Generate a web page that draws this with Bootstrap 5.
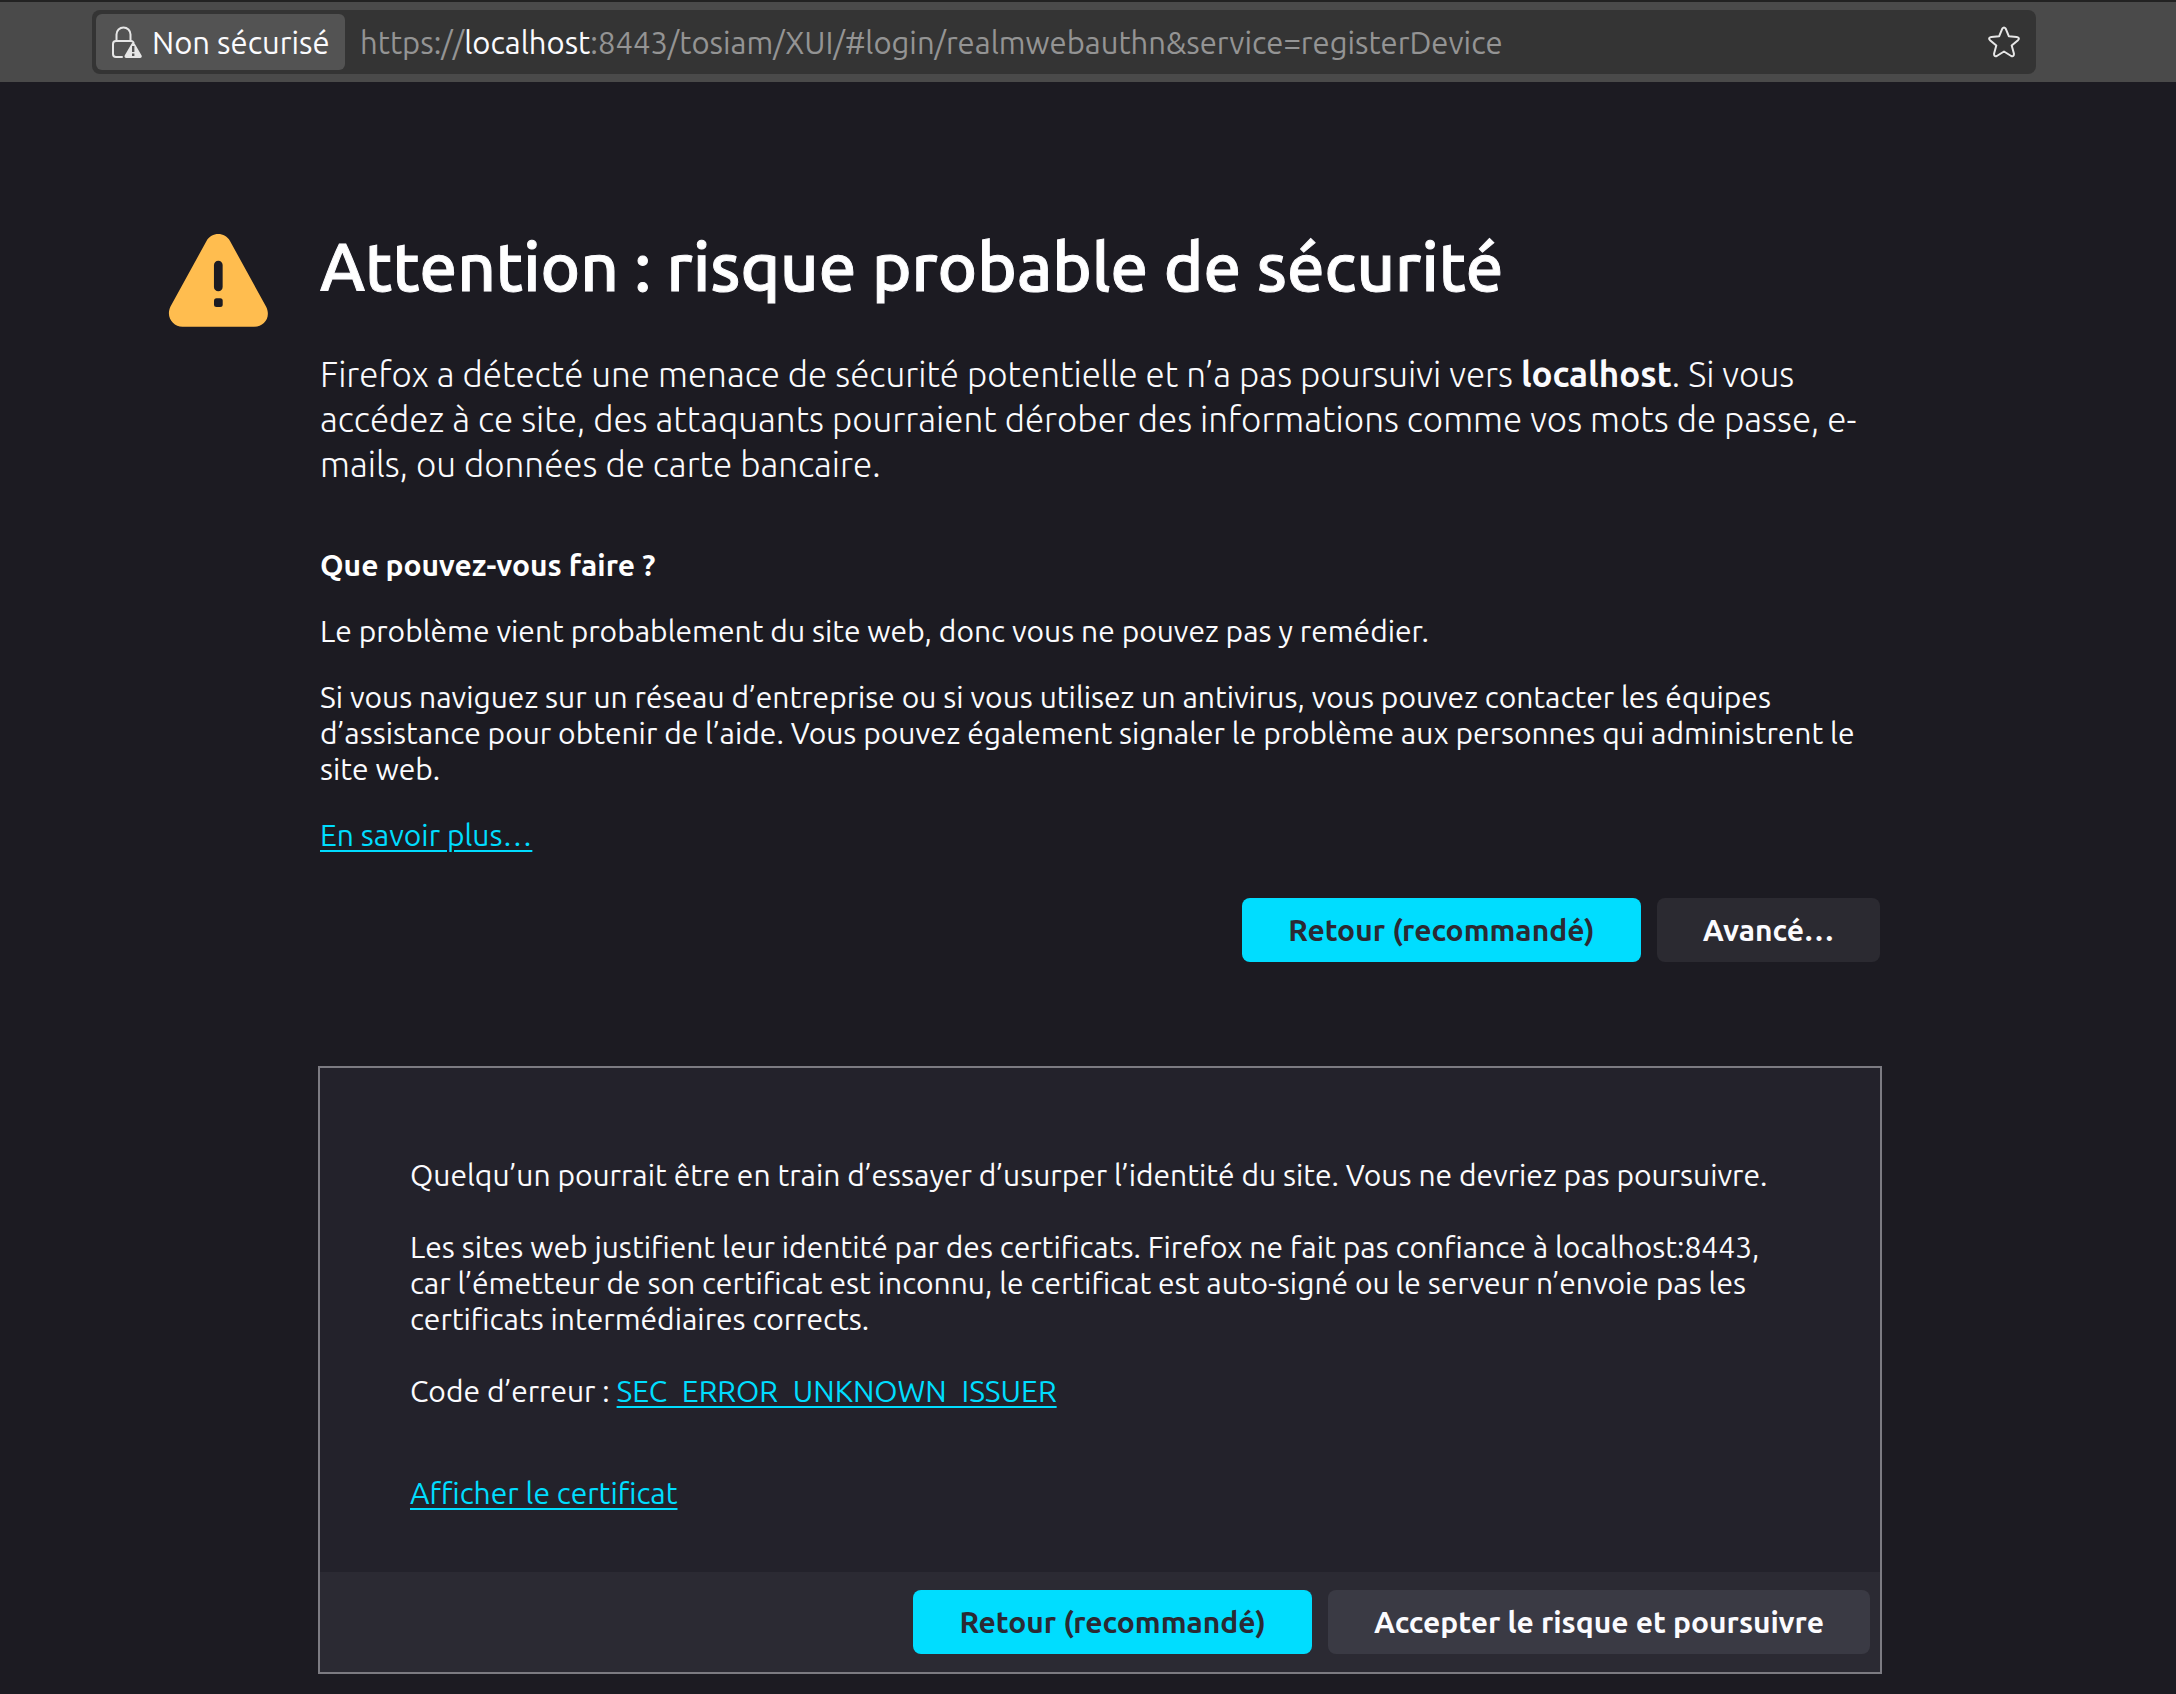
<!DOCTYPE html>
<html lang="fr" data-bs-theme="dark">
<head>
<meta charset="utf-8">
<meta name="viewport" content="width=device-width, initial-scale=1">
<title>Attention : risque probable de sécurité</title>
<link href="https://cdn.jsdelivr.net/npm/bootstrap@5.3.0/dist/css/bootstrap.min.css" rel="stylesheet">
<style>
  body { background: #1c1b22; color: #fbfbfe; font-family: Ubuntu, "Noto Sans", sans-serif; font-size: 30px; line-height: 36px; font-weight: 400; }
  .toolbar { background: #4a4a4a; border-top: 2px solid #222; padding: 8px 140px 8px 92px; font-size: 31px; line-height: 37px; }
  .urlbar { background: #343434; border-radius: 8px; height: 64px; padding: 4px; padding-right: 16px; }
  .identity { background: #535353; color: #fbfbfe; border: 0; border-radius: 6px; height: 56px; width: 249px; padding: 0 0 0 14px; gap: 8px; }
  .address { color: #949494; padding-left: 15px; }
  .address span { color: #fbfbfe; }
  .star-btn { background: none; border: 0; padding: 0; }
  .error-page { max-width: 1840px; padding: 145px 128px 18px 0; }
  .warn-col { width: 152px; padding-top: 7px; }
  .page-title { font-size: 67px; line-height: 79px; font-weight: 500; margin-bottom: 46px; -webkit-text-stroke: 1px #fbfbfe; }
  .intro { font-size: 35px; line-height: 45px; font-weight: 300; margin-bottom: 60px; }
  .intro strong { font-weight: 600; }
  .subtitle { font-size: 30px; line-height: 36px; font-weight: 600; margin-bottom: 30px; }
  .para { margin-bottom: 30px; }
  a, a:hover { color: #00ddff; text-decoration-thickness: 2px; text-underline-offset: 4px; }
  .act { height: 64px; border: 0; border-radius: 8px; padding: 0 46px; font-size: 30px; font-weight: 600; line-height: 36px; }
  .act-main, .act-main:hover { background: #00ddff; color: #2b2a33; }
  .act-alt, .act-alt:hover { background: #2b2a31; color: #fbfbfe; }
  .actions { margin-top: 45px; }
  .panel-box { border: 2px solid #7c7b82; background: #23222b; margin: 104px -2px 0; }
  .panel-text { padding: 89px 90px 61px; }
  .panel-text p { margin-bottom: 36px; }
  .panel-text .code-line { margin-bottom: 66px; }
  .panel-foot { background: #2b2a33; padding: 18px 10px; }
  .panel-foot .act-alt { background: #3a3a44; }
</style>
<script src="https://cdn.jsdelivr.net/npm/bootstrap@5.3.0/dist/js/bootstrap.bundle.min.js"></script>
</head>
<body>
<header class="toolbar">
  <div class="urlbar d-flex align-items-center">
    <button type="button" class="identity d-flex align-items-center flex-shrink-0 text-nowrap">
      <svg width="34" height="34" viewBox="0 0 34 34" aria-hidden="true">
        <g fill="none" stroke="#e6e6e6" stroke-width="2" stroke-linecap="round">
          <path d="M6.500 16V9.500a7 7 0 0 1 14 0V16"/>
          <path d="M12 32H6a3 3 0 0 1-3-3V19a3 3 0 0 1 3-3h15a3 3 0 0 1 2.500 1.500"/>
        </g>
        <path fill="#e6e6e6" d="M21.500 18.700a1.900 1.900 0 0 1 3.300 0l6.800 11.800a1.700 1.700 0 0 1-1.500 2.500H16.200a1.700 1.700 0 0 1-1.500-2.500z"/>
        <path stroke="#535353" stroke-width="2.400" d="M23.200 21v6M23.200 28.500v2.400"/>
      </svg>
      <span>Non sécurisé</span>
    </button>
    <div class="address flex-grow-1 text-nowrap">https://<span>localhost</span>:8443/tosiam/XUI/#login/realmwebauthn&amp;service=registerDevice</div>
    <button type="button" class="star-btn d-flex" aria-label="Ajouter aux marque-pages">
      <svg width="32" height="32" viewBox="0 0 32 32" fill="none" stroke="#e6e6e6" stroke-width="2" stroke-linejoin="round" aria-hidden="true">
        <path d="M14.300 2.700Q16 .3 17.700 2.700L20.800 10.200L28.700 10.900Q32.200 11.600 30 14.200L23.700 19.600L25.900 27.500Q26.200 31 23.200 30L16 25.500L8.800 30Q5.800 31 6.100 27.500L8.300 19.600L2 14.200Q-.2 11.600 3.300 10.900L11.200 10.200Z"/>
      </svg>
    </button>
  </div>
</header>

<main class="error-page mx-auto d-flex">
  <div class="warn-col flex-shrink-0">
    <svg width="101" height="94" viewBox="0 0 101 94" role="img" aria-label="Avertissement">
      <path fill="#ffbd4f" d="M38.500 7C43.500-2.200 57-2.200 62 7L98 72.500C103.500 83 96 92.700 86.500 92.700H14.500C5 92.700-2.500 83 2.500 72.500z"/>
      <path fill="none" stroke="#1c1b22" stroke-width="8.700" stroke-linecap="round" d="M50.300 31v22"/>
      <rect x="46" y="64.300" width="8.700" height="8.700" rx="2.500" fill="#1c1b22"/>
    </svg>
  </div>
  <div class="flex-grow-1">
    <h1 class="page-title">Attention : risque probable de sécurité</h1>
    <p class="intro">Firefox a détecté une menace de sécurité potentielle et n’a pas poursuivi vers <strong>localhost</strong>. Si vous<br>accédez à ce site, des attaquants pourraient dérober des informations comme vos mots de passe, e-<br>mails, ou données de carte bancaire.</p>
    <h2 class="subtitle">Que pouvez-vous faire ?</h2>
    <p class="para">Le problème vient probablement du site web, donc vous ne pouvez pas y remédier.</p>
    <p class="para">Si vous naviguez sur un réseau d’entreprise ou si vous utilisez un antivirus, vous pouvez contacter les équipes<br>d’assistance pour obtenir de l’aide. Vous pouvez également signaler le problème aux personnes qui administrent le<br>site web.</p>
    <p class="mb-0"><a href="#">En savoir plus…</a></p>
    <div class="actions d-flex justify-content-end gap-3">
      <button type="button" class="btn act act-main">Retour (recommandé)</button>
      <button type="button" class="btn act act-alt">Avancé…</button>
    </div>
    <section class="panel-box">
      <div class="panel-text">
        <p>Quelqu’un pourrait être en train d’essayer d’usurper l’identité du site. Vous ne devriez pas poursuivre.</p>
        <p>Les sites web justifient leur identité par des certificats. Firefox ne fait pas confiance à localhost:8443,<br>car l’émetteur de son certificat est inconnu, le certificat est auto-signé ou le serveur n’envoie pas les<br>certificats intermédiaires corrects.</p>
        <p class="code-line">Code d’erreur : <a href="#">SEC_ERROR_UNKNOWN_ISSUER</a></p>
        <a href="#">Afficher le certificat</a>
      </div>
      <div class="panel-foot d-flex justify-content-end gap-3">
        <button type="button" class="btn act act-main">Retour (recommandé)</button>
        <button type="button" class="btn act act-alt">Accepter le risque et poursuivre</button>
      </div>
    </section>
  </div>
</main>
</body>
</html>
